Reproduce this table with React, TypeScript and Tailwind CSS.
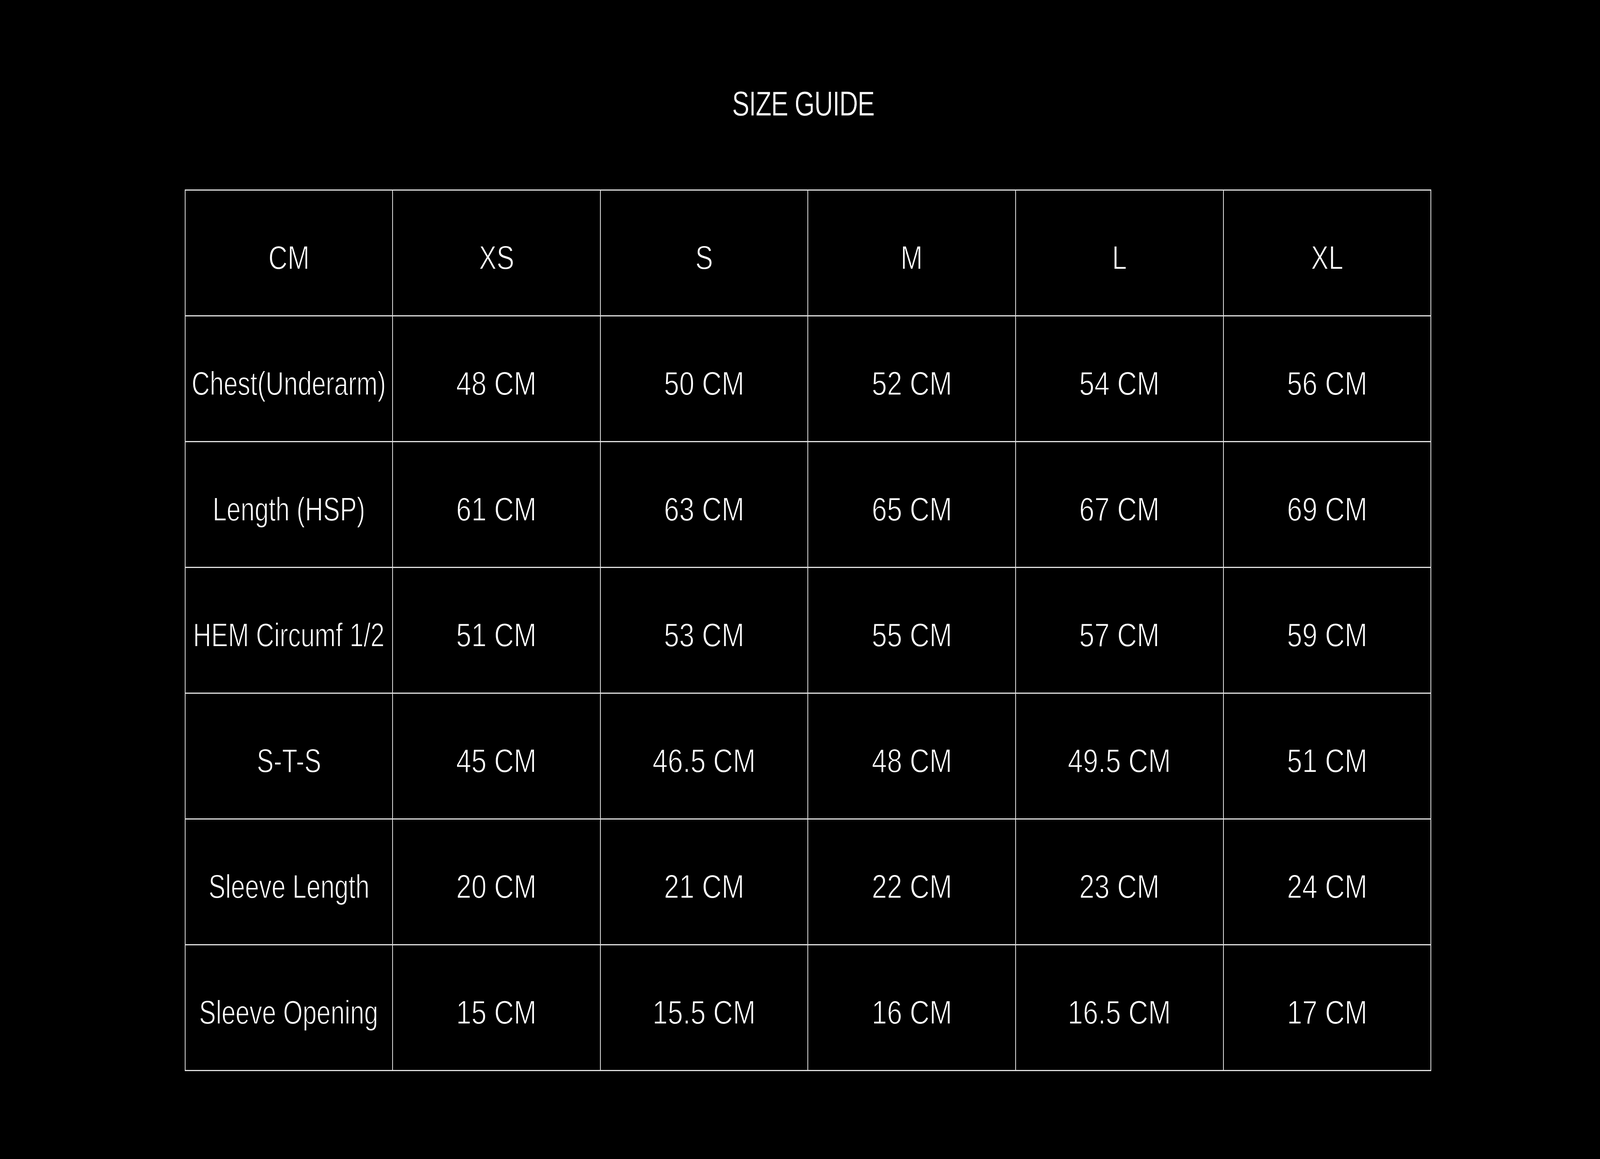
import { useEffect, useState } from "react";

const SIZES = ["XS", "S", "M", "L", "XL"];

const ROWS: { label: string; values: string[] }[] = [
  { label: "Chest(Underarm)", values: ["48", "50", "52", "54", "56"] },
  { label: "Length (HSP)", values: ["61", "63", "65", "67", "69"] },
  { label: "HEM Circumf 1/2", values: ["51", "53", "55", "57", "59"] },
  { label: "S-T-S", values: ["45", "46.5", "48", "49.5", "51"] },
  { label: "Sleeve Length", values: ["20", "21", "22", "23", "24"] },
  { label: "Sleeve Opening", values: ["15", "15.5", "16", "16.5", "17"] },
];

// design width of the artboard; text heights are in px, widths follow the window
const DESIGN_W = 7166;

// reference face is a light, extended grotesk -> stretch Liberation Sans
function Wide({ k, children }: { k: number; children: React.ReactNode }) {
  return (
    <div className="flex justify-center">
      <span
        className="inline-block shrink-0 origin-center whitespace-nowrap"
        style={{ transform: `scaleX(${k})` }}
      >
        {children}
      </span>
    </div>
  );
}

function Cell({ k, children }: { k: number; children: React.ReactNode }) {
  return (
    <td className="h-[322px] border-x-2 border-y-[3px] border-[#e2e2e2] p-0 pt-[22px] text-center align-middle">
      <Wide k={k}>{children}</Wide>
    </td>
  );
}

export default function App() {
  const [sx, setSx] = useState(() => window.innerWidth / DESIGN_W);

  useEffect(() => {
    const onResize = () => setSx(window.innerWidth / DESIGN_W);
    window.addEventListener("resize", onResize);
    return () => window.removeEventListener("resize", onResize);
  }, []);

  const labelK = 1.31 * sx;
  const headK = 1.38 * sx;
  const valueK = 1.42 * sx;

  return (
    <div className="min-h-screen w-full bg-black font-['Liberation_Sans',Arial,sans-serif] text-white">
      <h1 className="pl-[0.4%] pt-[221px] text-[89px] font-normal leading-none tracking-[-0.02em] [-webkit-text-stroke:1px_#000]">
        <Wide k={labelK}>SIZE GUIDE</Wide>
      </h1>

      <div className="ml-[11.54%] mt-[175px] w-[77.92%]">
        <table className="w-full table-fixed border-collapse text-[86px] font-normal leading-none [-webkit-text-stroke:1.8px_#000]">
          <thead>
            <tr>
              <Cell k={headK}>CM</Cell>
              {SIZES.map((s) => (
                <Cell key={s} k={headK}>
                  {s}
                </Cell>
              ))}
            </tr>
          </thead>
          <tbody>
            {ROWS.map((r) => (
              <tr key={r.label}>
                <Cell k={labelK}>{r.label}</Cell>
                {r.values.map((v, i) => (
                  <Cell key={i} k={valueK}>
                    {v} CM
                  </Cell>
                ))}
              </tr>
            ))}
          </tbody>
        </table>
      </div>
    </div>
  );
}
